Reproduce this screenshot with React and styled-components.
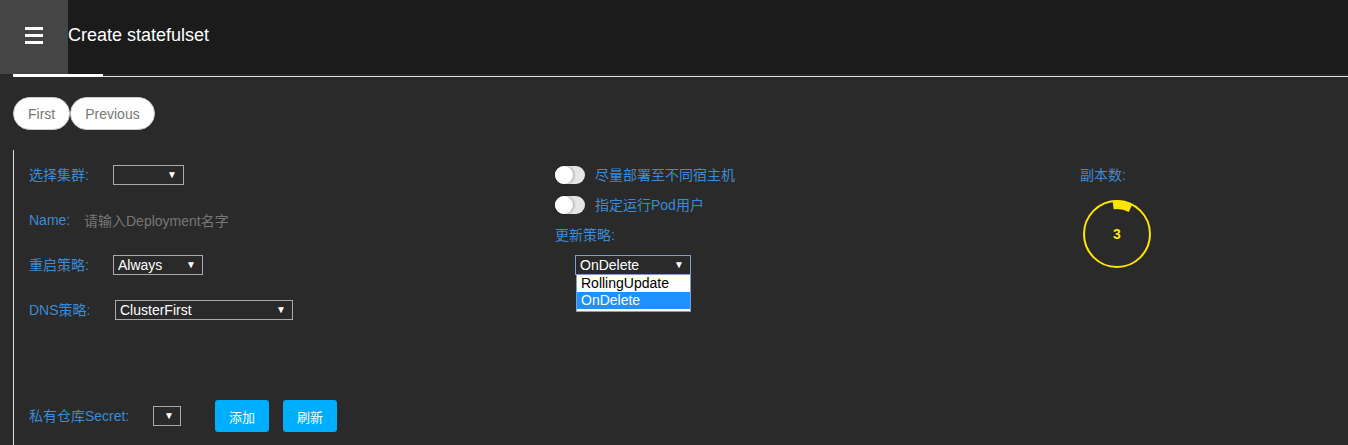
import React from 'react';
import styled, { createGlobalStyle } from 'styled-components';

const GlobalStyle = createGlobalStyle`
  html, body {
    margin: 0;
    padding: 0;
    background: #2a2a2a;
    font-family: 'Liberation Sans', Arial, 'Noto Sans CJK SC', sans-serif;
  }
  * { box-sizing: border-box; }
`;

export default function App() {
  return (
    <>
      <GlobalStyle />
      <Header>
        <MenuButton>
          <MenuIcon>
            <span />
            <span />
            <span />
          </MenuIcon>
        </MenuButton>
        <Title>Create statefulset</Title>
      </Header>
      <TabBar>
        <TabIndicator />
        <TabLine />
      </TabBar>

      <Pager>
        <PageButton>First</PageButton>
        <PageButton>Previous</PageButton>
      </Pager>

      <Form>
        <Columns>
          <Column>
            <FieldRow>
              <Label width={84}>选择集群:</Label>
              <Select width={71} />
            </FieldRow>
            <FieldRow>
              <Label width={55}>Name:</Label>
              <Placeholder>请输入Deployment名字</Placeholder>
            </FieldRow>
            <FieldRow>
              <Label width={84}>重启策略:</Label>
              <Select width={90}>Always</Select>
            </FieldRow>
            <FieldRow>
              <Label width={86}>DNS策略:</Label>
              <Select width={178}>ClusterFirst</Select>
            </FieldRow>
          </Column>

          <Column>
            <ToggleRow>
              <Toggle />
              <Label>尽量部署至不同宿主机</Label>
            </ToggleRow>
            <ToggleRow>
              <Toggle />
              <Label>指定运行Pod用户</Label>
            </ToggleRow>
            <Label>更新策略:</Label>
            <DropdownWrap>
              <Select width={116} focused>OnDelete</Select>
              <OptionList>
                <OptionItem>RollingUpdate</OptionItem>
                <OptionItem selected>OnDelete</OptionItem>
              </OptionList>
            </DropdownWrap>
          </Column>

          <Column>
            <Label>副本数:</Label>
            <Dial>
              <svg width="70" height="70" viewBox="0 0 70 70">
                <circle cx="35" cy="35" r="33" fill="none" stroke="#ffe500" strokeWidth="2" />
                <path
                  d="M 31.7 10.2 A 25 25 0 0 1 46.8 12.9 L 50.3 5.3 A 33.4 33.4 0 0 0 30.6 1.8 Z"
                  fill="#ffe500"
                />
              </svg>
              <DialValue>3</DialValue>
            </Dial>
          </Column>
        </Columns>

        <SecretRow>
          <Label width={124}>私有仓库Secret:</Label>
          <Select width={28} />
          <ActionButton>添加</ActionButton>
          <ActionButton>刷新</ActionButton>
        </SecretRow>
      </Form>
    </>
  );
}

const Header = styled.header`
  display: flex;
  align-items: center;
  height: 74px;
  background: #1b1b1b;
`;

const MenuButton = styled.div`
  width: 68px;
  height: 74px;
  background: #454545;
  display: flex;
  align-items: center;
  justify-content: center;
  padding-bottom: 4px;
`;

const MenuIcon = styled.div`
  display: flex;
  flex-direction: column;
  gap: 4px;

  > span {
    display: block;
    width: 18px;
    height: 3px;
    background: #fff;
  }
`;

const Title = styled.h1`
  margin: 0 0 4px 0;
  font-size: 18px;
  font-weight: normal;
  color: #fff;
`;

const TabBar = styled.div`
  display: flex;
  align-items: flex-end;
  height: 3px;
  padding-left: 13px;
`;

const TabIndicator = styled.div`
  width: 90px;
  height: 3px;
  background: #fff;
`;

const TabLine = styled.div`
  flex: 1;
  height: 1px;
  background: #e0e0e0;
`;

const Pager = styled.div`
  display: flex;
  padding: 20px 0 0 13px;
`;

const PageButton = styled.button`
  height: 33px;
  padding: 0 14px;
  border: 1px solid #ccc;
  border-radius: 17px;
  background: #fff;
  color: #777;
  font-family: inherit;
  font-size: 14px;
`;

const Form = styled.div`
  margin: 20px 0 0 13px;
  border-left: 1px solid #ddd;
  padding: 15px 0 13px 15px;
`;

const Columns = styled.div`
  display: grid;
  grid-template-columns: 526px 525px 1fr;
`;

const Column = styled.div`
  display: flex;
  flex-direction: column;
  align-items: flex-start;
`;

const FieldRow = styled.div`
  display: flex;
  align-items: center;
  height: 20px;
  margin-bottom: 25px;
`;

const Label = styled.span`
  display: inline-block;
  flex-shrink: 0;
  width: ${(p) => (p.width ? `${p.width}px` : 'auto')};
  color: #3b8bd6;
  font-size: 14px;
  line-height: 20px;
  white-space: nowrap;
`;

const Placeholder = styled.span`
  color: #777;
  font-size: 14px;
`;

const Select = styled.div`
  position: relative;
  width: ${(p) => p.width}px;
  height: 20px;
  border: 1px solid ${(p) => (p.focused ? '#7b9fd3' : '#aaa')};
  color: #fff;
  font-size: 14px;
  line-height: 18px;
  padding-left: 4px;
  white-space: nowrap;

  &::after {
    content: '▼';
    position: absolute;
    right: 6px;
    top: 0;
    font-size: 10px;
    color: #fff;
  }
`;

const ToggleRow = styled.div`
  display: flex;
  align-items: center;
  gap: 10px;
  height: 18px;
  margin-top: 1px;
  margin-bottom: 11px;
`;

const Toggle = styled.span`
  position: relative;
  width: 30px;
  height: 18px;
  border-radius: 9px;
  background: #e6e6e6;

  &::before {
    content: '';
    position: absolute;
    left: 0;
    top: 0;
    width: 18px;
    height: 18px;
    border-radius: 50%;
    background: #fff;
    box-shadow: 1px 0 3px rgba(0, 0, 0, 0.3);
  }
`;

const DropdownWrap = styled.div`
  position: relative;
  margin: 10px 0 0 20px;
`;

const OptionList = styled.div`
  position: absolute;
  top: 19px;
  left: 1px;
  width: 115px;
  border: 1px solid #7b9fd3;
  background: #fff;
  padding-bottom: 2px;
`;

const OptionItem = styled.div`
  height: 17px;
  padding-left: 4px;
  font-size: 14px;
  line-height: 17px;
  color: ${(p) => (p.selected ? '#fff' : '#000')};
  background: ${(p) => (p.selected ? '#1e90ff' : '#fff')};
`;

const Dial = styled.div`
  position: relative;
  width: 70px;
  height: 70px;
  margin: 14px 0 0 2px;

  svg {
    display: block;
  }
`;

const DialValue = styled.span`
  position: absolute;
  inset: 0;
  display: flex;
  align-items: center;
  justify-content: center;
  color: #ffe500;
  font-size: 14px;
  font-weight: bold;
`;

const SecretRow = styled.div`
  display: flex;
  align-items: center;
  margin-top: 55px;

  > button:first-of-type {
    margin-left: 34px;
  }
`;

const ActionButton = styled.button`
  width: 54px;
  height: 32px;
  margin-right: 14px;
  border: none;
  border-radius: 3px;
  background: #00aeff;
  color: #fff;
  font-family: inherit;
  font-size: 13px;
`;
